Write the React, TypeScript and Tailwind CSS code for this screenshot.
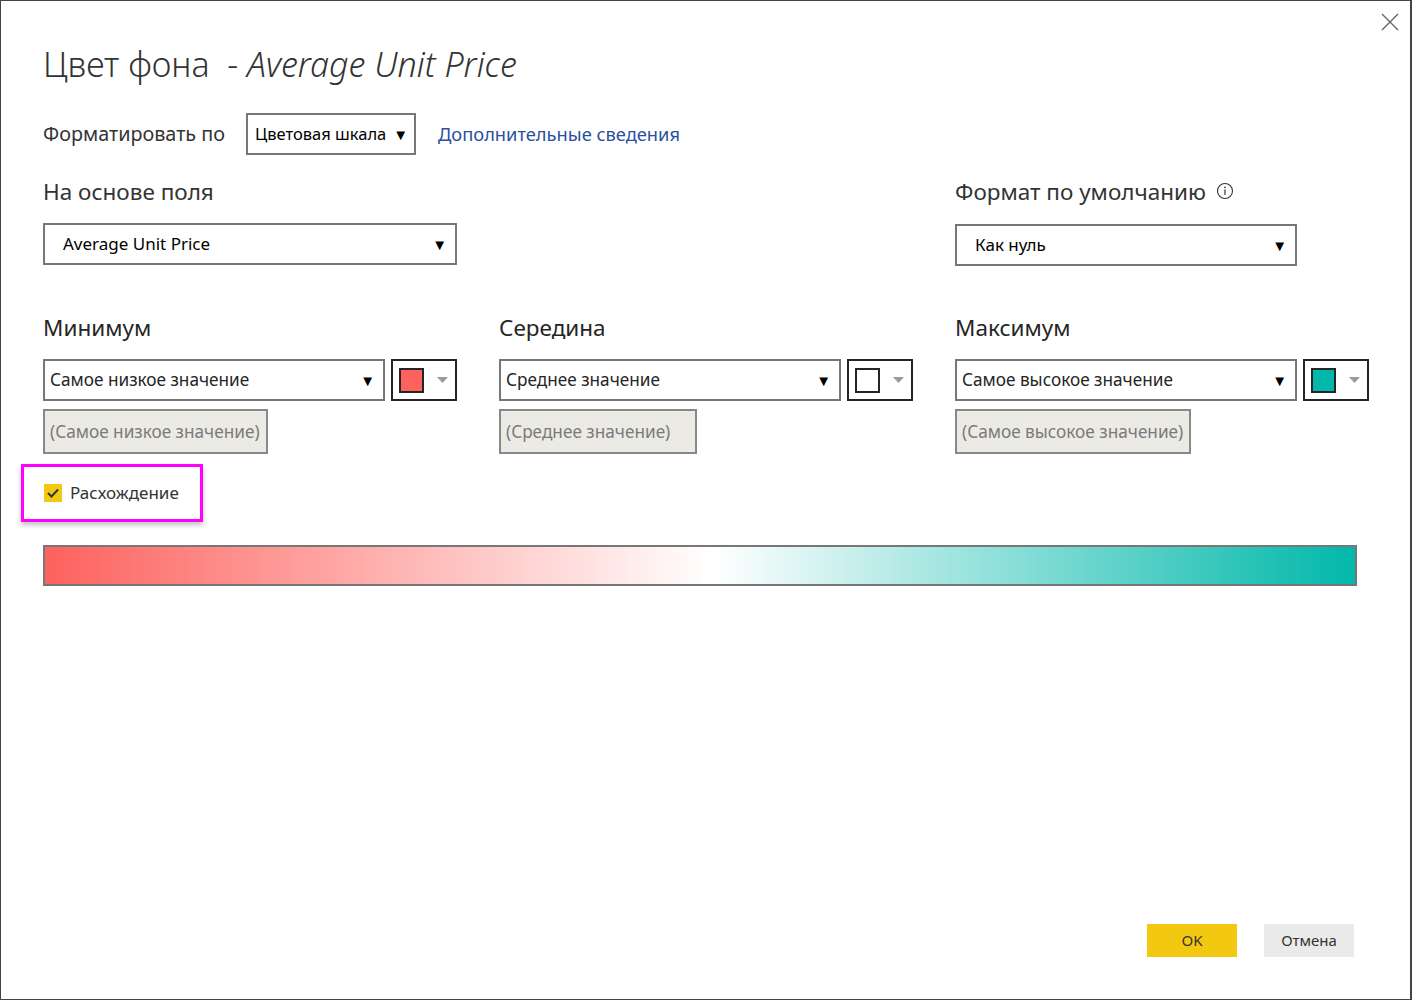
const Caret = () => <span className="text-[15px] text-black leading-none">▼</span>

const ColorButton = ({ swatch }: { swatch: string }) => {
    return (
        <div className="w-[66px] h-[42px] border-2 border-[#252525] flex items-center pl-[6px] gap-[13px] bg-white">
            <div className={`w-[25px] h-[25px] border-2 border-[#252525] ${swatch}`}></div>
            <svg width="11" height="6" viewBox="0 0 11 6"><path d="M0 0 L11 0 L5.5 6 Z" fill="#9a9a9a" /></svg>
        </div>
    )
}

const Column = ({ title, value, swatch, selectW, inputW }: { title: string; value: string; swatch: string; selectW: string; inputW: string }) => {
    return (
        <div>
            <div className="text-[22.5px] text-[#252525] leading-[30px] h-[30px]">{title}</div>
            <div className="mt-[16px] flex gap-[6px]">
                <div className={`${selectW} h-[42px] border-2 border-[#777] flex items-center justify-between pl-[5px] pr-[8px] text-[17.2px] text-[#252525]`}>
                    <span>{value}</span>
                    <Caret />
                </div>
                <ColorButton swatch={swatch} />
            </div>
            <div className={`${inputW} mt-[8px] h-[45px] border-2 border-[#888] bg-[#ebeae4] flex items-center pl-[5px] text-[17.2px] text-[#7a7a7a]`}>
                ({value})
            </div>
        </div>
    )
}

const App = () => {
    return (
        <div className="w-[1412px] h-[1000px] bg-white border border-[#444] border-r-2 relative font-['Noto_Sans','Open_Sans',sans-serif] text-[#333]">
            <button className="absolute right-[10px] top-[11px] w-[20px] h-[20px] flex items-center justify-center">
                <svg width="18" height="18" viewBox="0 0 18 18"><path d="M1 1 L17 17 M17 1 L1 17" stroke="#666" strokeWidth="1.4" /></svg>
            </button>
            <div className="px-[42px] pt-[40px]">
                <h1 className="text-[34px] font-light leading-[46px] text-[#333]">
                    Цвет фона &nbsp;- <span className="italic">Average Unit Price</span>
                </h1>
                <div className="mt-[26px] flex items-center h-[42px]">
                    <span className="text-[19.8px] text-[#333]">Форматировать по</span>
                    <div className="ml-[21px] w-[170px] h-[42px] border-2 border-[#777] flex items-center justify-between pl-[7px] pr-[6px] text-[16.5px] text-black">
                        <span>Цветовая шкала</span>
                        <Caret />
                    </div>
                    <a className="ml-[22px] text-[18.3px] text-[#2c4fa1]">Дополнительные сведения</a>
                </div>
                <div className="mt-[22px] grid grid-cols-[456px_456px_456px]">
                    <div className="col-span-2">
                        <div className="text-[22.5px] text-[#333] leading-[30px] h-[30px]">На основе поля</div>
                        <div className="mt-[16px] w-[414px] h-[42px] border-2 border-[#777] flex items-center justify-between pl-[18px] pr-[8px] text-[17px] text-black">
                            <span>Average Unit Price</span>
                            <Caret />
                        </div>
                    </div>
                    <div>
                        <div className="flex items-center gap-[10px] h-[30px]">
                            <span className="text-[22.5px] text-[#333] leading-[30px]">Формат по умолчанию</span>
                            <svg width="18" height="18" viewBox="0 0 18 18" className="-mt-[3px]">
                                <circle cx="9" cy="9" r="7.5" fill="none" stroke="#333" strokeWidth="1.1" />
                                <circle cx="9" cy="5.3" r="0.9" fill="#333" />
                                <path d="M9 7.5 V13" stroke="#333" strokeWidth="1.2" />
                            </svg>
                        </div>
                        <div className="mt-[17px] w-[342px] h-[42px] border-2 border-[#777] flex items-center justify-between pl-[18px] pr-[8px] text-[17px] text-black">
                            <span>Как нуль</span>
                            <Caret />
                        </div>
                    </div>
                </div>
                <div className="mt-[47px] grid grid-cols-[456px_456px_456px]">
                    <Column title="Минимум" value="Самое низкое значение" swatch="bg-[#fd625e]" selectW="w-[342px]" inputW="w-[225px]" />
                    <Column title="Середина" value="Среднее значение" swatch="bg-white" selectW="w-[342px]" inputW="w-[198px]" />
                    <Column title="Максимум" value="Самое высокое значение" swatch="bg-[#01b8aa]" selectW="w-[342px]" inputW="w-[236px]" />
                </div>
                <div className="mt-[10px] -ml-[22px] w-[182px] h-[58px] border-[3px] border-[#ff00ff] shadow-[0_3px_5px_rgba(0,0,0,0.25)] flex items-center pl-[20px] gap-[8px]">
                    <div className="w-[18px] h-[18px] bg-[#f2c811] flex items-center justify-center">
                        <svg width="14" height="12" viewBox="0 0 14 12"><path d="M2 6 L5.5 9.5 L12 2.5" fill="none" stroke="#333" strokeWidth="2" /></svg>
                    </div>
                    <span className="text-[17px] text-[#333]">Расхождение</span>
                </div>
                <div className="mt-[23px] w-[1314px] h-[41px] border-2 border-[#777] bg-[linear-gradient(to_right,#fd625e_0%,#ffffff_51%,#01b8aa_100%)]"></div>
            </div>
            <div className="absolute left-[1146px] top-[923px] flex gap-[27px]">
                <button className="w-[90px] h-[33px] bg-[#f2c811] text-[15px] text-[#333]">OK</button>
                <button className="w-[90px] h-[33px] bg-[#eaeaea] text-[15px] text-[#333]">Отмена</button>
            </div>
        </div>
    )
}

export default App
